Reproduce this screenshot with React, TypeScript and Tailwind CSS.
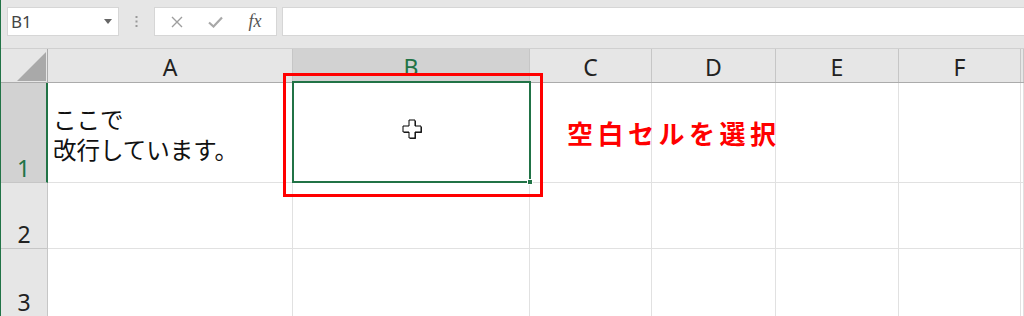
import React from 'react';

const cols = ['A', 'B', 'C', 'D', 'E', 'F', ''];
const jp = { fontFamily: '"Noto Sans CJK JP", "Noto Sans", sans-serif' };
const ui = { fontFamily: '"Noto Sans", "Liberation Sans", sans-serif' };

function HeaderCell({ label, selected }: { label: string; selected?: boolean }) {
  return (
    <div
      className={`flex items-center justify-center border-r border-[#c6c6c6] text-[23px] leading-none pt-[4px] ${
        selected ? 'bg-[#d2d2d2] text-[#217346]' : 'bg-[#e6e6e6] text-[#222]'
      }`}
    >
      {label}
    </div>
  );
}

function RowHeader({ n, selected }: { n: number; selected?: boolean }) {
  return (
    <div
      className={`flex items-end justify-center text-[23px] leading-[28px] border-b ${
        selected
          ? 'bg-[#d2d2d2] text-[#217346] border-[#c6c6c6] border-r-2 border-r-[#217346]'
          : 'bg-[#e6e6e6] text-[#222] border-[#c6c6c6] border-r border-r-[#c6c6c6]'
      }`}
    >
      {n}
    </div>
  );
}

function Cell({ children }: { children?: React.ReactNode }) {
  return <div className="border-r border-b border-[#e1e1e1] bg-white">{children}</div>;
}

export default function App() {
  return (
    <div
      className="relative w-[1024px] h-[316px] overflow-hidden bg-[#e6e6e6] border-l border-[#217346]"
      style={ui}
    >
      {/* formula bar */}
      <div className="flex items-center h-[48px] pb-[5px] pl-[6px]">
        <div className="flex items-center justify-between w-[112px] h-[29px] bg-white border border-[#d6d6d6] pl-[3px] pr-[6px]">
          <span className="text-[17px] text-[#444]">B1</span>
          <svg width="8" height="5" viewBox="0 0 8 5">
            <path d="M0 0h8L4 5z" fill="#666" />
          </svg>
        </div>
        <div className="w-[35px] flex justify-center">
          <svg width="3" height="11" viewBox="0 0 3 11">
            <rect x="0.5" y="0" width="2" height="2" fill="#999" />
            <rect x="0.5" y="4.5" width="2" height="2" fill="#999" />
            <rect x="0.5" y="9" width="2" height="2" fill="#999" />
          </svg>
        </div>
        <div className="flex items-center w-[123px] h-[29px] bg-white border border-[#d6d6d6]">
          <div className="w-[40px] flex justify-center pl-[4px]">
            <svg width="12" height="12" viewBox="0 0 12 12">
              <path d="M1 1l10 10M11 1L1 11" stroke="#9e9e9e" strokeWidth="1.4" />
            </svg>
          </div>
          <div className="w-[40px] flex justify-center">
            <svg width="15" height="12" viewBox="0 0 15 12">
              <path d="M1 6.5l4.5 4L14 1.5" stroke="#a8a8a8" strokeWidth="2.2" fill="none" />
            </svg>
          </div>
          <div
            className="w-[40px] flex justify-center text-[18px] italic text-[#555]"
            style={{ fontFamily: '"Liberation Serif", serif' }}
          >
            fx
          </div>
        </div>
        <div className="flex-1 h-[29px] ml-[5px] bg-white border border-[#d6d6d6] border-r-0" />
      </div>

      {/* grid */}
      <div className="grid grid-cols-[47px_245px_237px_122px_124px_123px_122px_1fr] grid-rows-[34px_100px_66px_68px] border-t border-[#d0d0d0]">
        <div className="relative bg-[#e6e6e6] border-r border-b border-[#ababab]">
          <svg className="absolute left-[16px] top-[3px]" width="29" height="29" viewBox="0 0 29 29">
            <path d="M29 0V29H0z" fill="#a9a9a9" />
          </svg>
        </div>
        {cols.map((c, i) => (
          <div key={i} className={`border-b ${c === 'B' ? 'border-b-2 border-[#217346]' : 'border-[#ababab]'} grid`}>
            <HeaderCell label={c} selected={c === 'B'} />
          </div>
        ))}

        <RowHeader n={1} selected />
        <Cell>
          <div className="pl-[5px] pt-[21px] text-[23.5px] leading-[30px] text-[#111]" style={jp}>
            <div>ここで</div>
            <div>改行しています。</div>
          </div>
        </Cell>
        {[0, 1, 2, 3, 4, 5].map((i) => (
          <Cell key={i} />
        ))}

        <RowHeader n={2} />
        {[0, 1, 2, 3, 4, 5, 6].map((i) => (
          <Cell key={i} />
        ))}

        <RowHeader n={3} />
        {[0, 1, 2, 3, 4, 5, 6].map((i) => (
          <Cell key={i} />
        ))}
      </div>

      {/* selection on B1 */}
      <div className="absolute left-[291px] top-[81px] w-[239px] h-[102px] border-2 border-[#217346]">
        <div className="absolute right-[-4px] bottom-[-4px] w-[6px] h-[6px] bg-[#217346] border border-white" />
      </div>

      {/* pointer */}
      <svg className="absolute left-[401px] top-[119px]" width="21" height="21" viewBox="0 0 21 21">
        <path d="M7 1h6v6h6v6h-6v6H7v-6H1V7h6z" fill="#333" transform="translate(1 1)" />
        <path d="M7 1h6v6h6v6h-6v6H7v-6H1V7h6z" fill="#fff" stroke="#000" strokeWidth="1" />
      </svg>

      {/* annotation */}
      <div className="absolute left-[282px] top-[73px] w-[260px] h-[124px] border-[3px] border-[#ff0000]" />
      <div
        className="absolute left-[566px] top-[116px] text-[26px] leading-[34px] font-bold tracking-[4.5px] text-[#ff0000]"
        style={jp}
      >
        空白セルを選択
      </div>
    </div>
  );
}
